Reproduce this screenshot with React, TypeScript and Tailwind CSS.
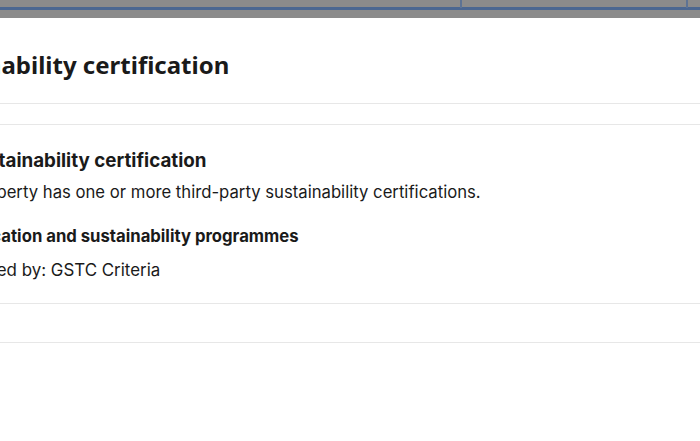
export default function App() {
  return (
    <div className="relative h-[441px] w-[700px] overflow-hidden bg-white font-['Inter',sans-serif] text-[#1a1a1a]">
      {/* dimmed page strip behind the modal */}
      <div className="relative h-[18px] bg-[#8b8b8b]">
        <div className="absolute left-0 right-0 top-[7px] h-[3px] bg-[#4b6791]" />
        <div className="absolute left-[460px] top-0 h-[8px] w-[2px] bg-[#5d7394]" />
        <div className="absolute left-[686px] top-0 h-[8px] w-[2px] bg-[#5d7394]" />
      </div>

      <div className="ml-[-52px]">
        <div className="flex h-[86px] items-center border-b border-[#e7e7e7] pt-[9px]">
          <h2 className="ml-[-35px] whitespace-nowrap font-['Noto_Sans',sans-serif] text-[24px] font-bold">
            Sustainability certification
          </h2>
        </div>
        <div className="h-[21px] border-b border-[#e7e7e7]" />
        <div className="border-b border-[#e7e7e7] pb-[20px] pt-[23px]">
          <h3 className="ml-[16px] whitespace-nowrap text-[18.8px] font-bold leading-[26px]">
            Sustainability certification
          </h3>
          <p className="ml-[-16px] mt-[6px] whitespace-nowrap text-[16.7px] leading-[25px]">
            This property has one or more third-party sustainability certifications.
          </p>
          <h4 className="ml-[-8px] mt-[19px] whitespace-nowrap text-[16.7px] font-bold leading-[25px]">
            Certification and sustainability programmes
          </h4>
          <p className="mt-[9px] whitespace-nowrap text-[16.9px] leading-[25px]">Certified by: GSTC Criteria</p>
        </div>
        <div className="h-[39px] border-b border-[#e7e7e7]" />
      </div>
    </div>
  );
}
